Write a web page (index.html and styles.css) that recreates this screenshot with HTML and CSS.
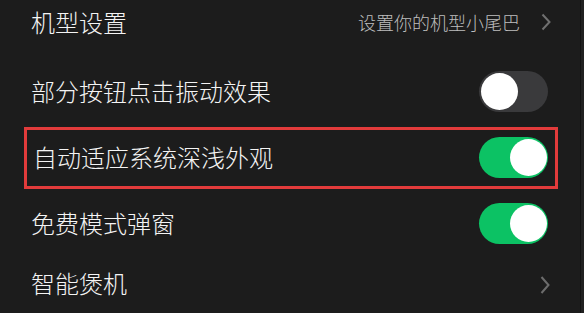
FILE: index.html
```html
<!DOCTYPE html>
<html lang="zh">
<head>
<meta charset="utf-8">
<link rel="stylesheet" href="styles.css">
</head>
<body>
<div class="screen">
  <div class="list">
    <div class="row row-first">
      <span class="label">机型设置</span>
      <span class="right">
        <span class="sub">设置你的机型小尾巴</span>
        <svg class="chev" width="12" height="18" viewBox="0 0 12 18"><path d="M2.5 1.5 L9.5 9 L2.5 16.5" fill="none" stroke="#707070" stroke-width="2"/></svg>
      </span>
    </div>
    <div class="row">
      <span class="label">部分按钮点击振动效果</span>
      <span class="toggle off"><span class="knob"></span></span>
    </div>
    <div class="row row-hl">
      <span class="label">自动适应系统深浅外观</span>
      <span class="toggle on"><span class="knob"></span></span>
      <span class="highlight"></span>
    </div>
    <div class="row">
      <span class="label">免费模式弹窗</span>
      <span class="toggle on"><span class="knob"></span></span>
    </div>
    <div class="row row-last">
      <span class="label">智能煲机</span>
      <svg class="chev" width="12" height="20" viewBox="0 0 12 20"><path d="M2.5 2 L9.5 10 L2.5 18" fill="none" stroke="#6c6c6c" stroke-width="2"/></svg>
    </div>
  </div>
  <div class="edge"></div>
</div>
</body>
</html>
```

FILE: styles.css
```css
html, body {
  margin: 0;
  padding: 0;
  background: #1c1c1c;
}
.screen {
  width: 584px;
  height: 313px;
  overflow: hidden;
  display: flex;
  background: #1c1c1c;
  font-family: "Noto Sans CJK SC", "Noto Sans", sans-serif;
  font-weight: 300;
}
.list {
  flex: 1;
  display: flex;
  flex-direction: column;
}
.edge {
  width: 3px;
  border-left: 1px solid #121212;
  background: #202020;
}
.row {
  position: relative;
  height: 66px;
  flex: none;
  display: flex;
  align-items: center;
  justify-content: space-between;
  padding: 0 32px 0 31px;
}
.row-first {
  height: 44px;
  margin-bottom: 14px;
  padding-right: 28px;
}
.row-last {
  height: 58px;
  padding-right: 29px;
}
.label {
  color: #f4f4f4;
  font-size: 24px;
  line-height: 1;
  letter-spacing: 0;
}
.row-last .label {
  margin-top: -4px;
}
.row-hl .label {
  margin-left: 2px;
}
.right {
  display: flex;
  align-items: center;
  gap: 20px;
}
.sub {
  color: #bebebe;
  font-size: 18px;
  line-height: 1;
}
.chev {
  display: block;
}
.toggle {
  width: 69px;
  height: 41px;
  border-radius: 21px;
  position: relative;
  display: block;
  flex: none;
}
.toggle.off {
  background: #3a3a3c;
}
.toggle.on {
  background: #0cc264;
}
.knob {
  position: absolute;
  top: 2px;
  width: 37px;
  height: 37px;
  border-radius: 50%;
  background: #ffffff;
}
.toggle.off .knob {
  left: 2px;
}
.toggle.on .knob {
  right: 1px;
}
.highlight {
  position: absolute;
  left: 24px;
  top: 3px;
  width: 528px;
  height: 56px;
  border: 3px solid #e23b3b;
  pointer-events: none;
}
```
